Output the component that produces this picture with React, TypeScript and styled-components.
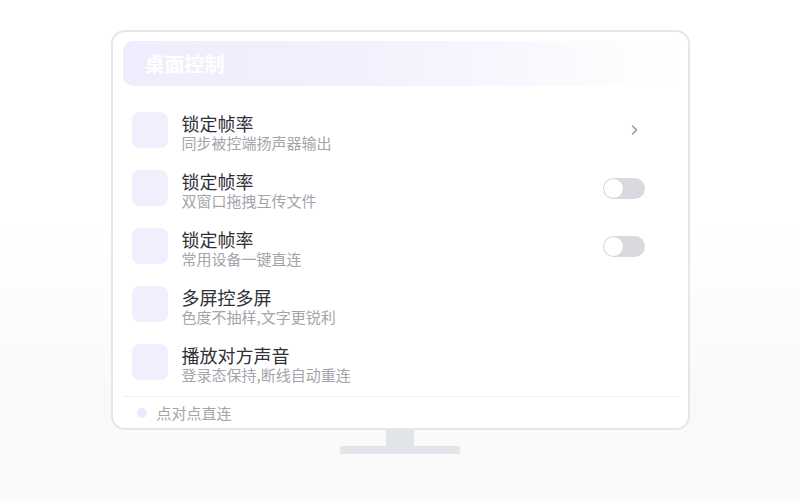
import React from 'react';
import styled, {createGlobalStyle} from 'styled-components';

const GlobalStyle = createGlobalStyle`
  html, body {
    margin: 0;
    padding: 0;
  }
  body {
    font-family: "Noto Sans CJK SC", "Noto Sans", sans-serif;
    background: #ffffff;
  }
`;

const Page = styled.div`
  width: 800px;
  height: 500px;
  box-sizing: border-box;
  padding-top: 30px;
  display: flex;
  flex-direction: column;
  align-items: center;
  background: linear-gradient(180deg, #ffffff 0%, #ffffff 45%, #f9f9fa 80%, #fbfbfc 100%);
`;

const Screen = styled.div`
  width: 579px;
  height: 400px;
  box-sizing: border-box;
  border: 2px solid #e4e6ea;
  border-radius: 14px;
  background: #ffffff;
  padding: 9px 10px 0 10px;
  display: flex;
  flex-direction: column;
`;

const Header = styled.div`
  height: 45px;
  flex: none;
  border-radius: 10px;
  background: linear-gradient(90deg, #efecfd 0%, #f3f1fd 45%, #ffffff 100%);
  display: flex;
  align-items: center;
  padding-left: 22px;
`;

const HeaderTitle = styled.div`
  color: #ffffff;
  font-size: 20px;
  font-weight: 600;
  line-height: 24px;
`;

const List = styled.div`
  margin-top: 15px;
  display: flex;
  flex-direction: column;
`;

const Row = styled.div`
  height: 58px;
  box-sizing: border-box;
  padding: 11px 33px 0 9px;
  display: flex;
  align-items: flex-start;
`;

const Tile = styled.div`
  width: 36px;
  height: 36px;
  flex: none;
  border-radius: 8px;
  background: #f1eefd;
`;

const Texts = styled.div`
  margin-left: 14px;
  flex: 1;
  display: flex;
  flex-direction: column;
`;

const Title = styled.div`
  font-size: 18px;
  line-height: 22px;
  color: #303035;
`;

const Subtitle = styled.div`
  font-size: 15px;
  line-height: 18px;
  color: #a3a5ab;
`;

const Trail = styled.div`
  width: 42px;
  height: 36px;
  flex: none;
  display: flex;
  align-items: center;
  justify-content: flex-end;
`;

const Switch = styled.div<{$on?: boolean}>`
  width: 42px;
  height: 21px;
  border-radius: 11px;
  box-sizing: border-box;
  padding: 1px;
  background: ${p => (p.$on ? '#8b7cf6' : '#d8dadf')};
  display: flex;
  justify-content: ${p => (p.$on ? 'flex-end' : 'flex-start')};
  align-items: center;
`;

const Knob = styled.div`
  width: 19px;
  height: 19px;
  border-radius: 50%;
  background: #ffffff;
  box-shadow: 0 0 0 0.5px #d0d2d8;
`;

const Chevron = styled.svg`
  margin-right: 6px;
`;

const Divider = styled.div`
  margin-top: 5px;
  height: 1px;
  background: #eef0f2;
`;

const Footer = styled.div`
  height: 31px;
  display: flex;
  align-items: center;
  padding-left: 14px;
`;

const Dot = styled.div`
  width: 10px;
  height: 10px;
  border-radius: 50%;
  background: #ece9fc;
`;

const FooterText = styled.div`
  margin-left: 10px;
  font-size: 15px;
  line-height: 18px;
  color: #a3a5ab;
`;

const Neck = styled.div`
  width: 28px;
  height: 16px;
  background: #e1e4e8;
`;

const Base = styled.div`
  width: 120px;
  height: 8px;
  background: #e1e4e8;
`;

type Item = {title: string; sub: string; trail: 'chevron' | 'switch' | 'none'};

const items: Item[] = [
  {title: '锁定帧率', sub: '同步被控端扬声器输出', trail: 'chevron'},
  {title: '锁定帧率', sub: '双窗口拖拽互传文件', trail: 'switch'},
  {title: '锁定帧率', sub: '常用设备一键直连', trail: 'switch'},
  {title: '多屏控多屏', sub: '色度不抽样,文字更锐利', trail: 'none'},
  {title: '播放对方声音', sub: '登录态保持,断线自动重连', trail: 'none'},
];

const SettingRow = ({item}: {item: Item}) => (
  <Row>
    <Tile />
    <Texts>
      <Title>{item.title}</Title>
      <Subtitle>{item.sub}</Subtitle>
    </Texts>
    <Trail>
      {item.trail === 'chevron' && (
        <Chevron width="10" height="14" viewBox="0 0 10 14">
          <path d="M3.5 3 L7.5 7 L3.5 11" fill="none" stroke="#8b8f98" strokeWidth="1.3" strokeLinecap="round" strokeLinejoin="round" />
        </Chevron>
      )}
      {item.trail === 'switch' && (
        <Switch>
          <Knob />
        </Switch>
      )}
    </Trail>
  </Row>
);

export default function App() {
  return (
    <>
      <GlobalStyle />
      <Page>
        <Screen>
          <Header>
            <HeaderTitle>桌面控制</HeaderTitle>
          </Header>
          <List>
            {items.map((item, i) => (
              <SettingRow key={i} item={item} />
            ))}
          </List>
          <Divider />
          <Footer>
            <Dot />
            <FooterText>点对点直连</FooterText>
          </Footer>
        </Screen>
        <Neck />
        <Base />
      </Page>
    </>
  );
}
